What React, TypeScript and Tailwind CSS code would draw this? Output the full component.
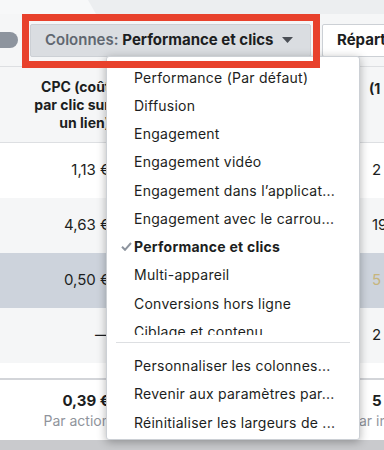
import React from "react";

const menuItems = [
  "Performance (Par défaut)",
  "Diffusion",
  "Engagement",
  "Engagement vidéo",
  "Engagement dans l’applicat...",
  "Engagement avec le carrou...",
  "Performance et clics",
  "Multi-appareil",
  "Conversions hors ligne",
  "Ciblage et contenu",
];

const actions = [
  "Personnaliser les colonnes...",
  "Revenir aux paramètres par...",
  "Réinitialiser les largeurs de ...",
];

const rows = [
  { cpc: "1,13 €", other: "2", bg: "bg-white" },
  { cpc: "4,63 €", other: "19", bg: "bg-[#f5f6f7]" },
  { cpc: "0,50 €", other: "", bg: "bg-[#cdd3dc]" },
  { cpc: "—", other: "2", bg: "bg-[#f5f6f7]" },
];

function Check() {
  return (
    <svg width="11" height="9" viewBox="0 0 11 9" className="absolute left-[14px] top-[9px]">
      <path d="M1 4.8 L4 7.8 L10 1" fill="none" stroke="#8d949e" strokeWidth="2" />
    </svg>
  );
}

export default function App() {
  const selected = "Performance et clics";
  return (
    <div
      className="relative w-[384px] h-[450px] overflow-hidden bg-[#f5f6f7] text-[#1c1e21]"
      style={{ fontFamily: "Inter, 'Liberation Sans', sans-serif" }}
    >
      {/* top strip with tab */}
      <div className="h-[14px] bg-[#eceef0] flex">
        <div className="w-[96px] h-full bg-[#f7f8f9] [clip-path:polygon(0_0,88px_0,96px_100%,0_100%)]"></div>
      </div>

      {/* toolbar */}
      <div className="h-[53px] flex items-center border-b border-[#dddfe2] bg-[#f5f6f7]">
        <div className="shrink-0 w-[28px] h-[16px] -ml-[10px] rounded-full bg-[#8d949e]"></div>
        <button
          type="button"
          className="shrink-0 ml-[12px] w-[281px] h-[33px] rounded-[2px] bg-[#dadde1] border border-[#ccd0d5] flex items-center pl-[14px] pr-[17px] text-[15px] whitespace-nowrap"
        >
          <span className="font-semibold text-[#606770]">Colonnes:&nbsp;</span>
          <span className="font-bold text-[#1c1e21]">Performance et clics</span>
          <svg width="11" height="6" viewBox="0 0 11 6" className="ml-auto">
            <path d="M0 0 H11 L5.5 6 Z" fill="#4b4f56" />
          </svg>
        </button>
        <button
          type="button"
          className="shrink-0 ml-[11px] h-[33px] pl-[14px] pr-4 rounded-[2px] bg-white border border-[#ccd0d5] text-[15px] font-bold whitespace-nowrap"
        >
          Répartition
        </button>
      </div>

      {/* table header */}
      <div className="h-[76px] flex items-center border-b border-[#dddfe2] bg-[#f5f6f7]">
        <div className="shrink-0 w-[118px] pr-2 text-right text-[14px] font-bold leading-[18px]">
          CPC (coût
          <br />
          par clic sur
          <br />
          un lien)
        </div>
        <div className="shrink-0 w-[232px]"></div>
        <div className="flex-1 self-start pt-[11px] pl-[19px] text-[14px] font-bold whitespace-nowrap overflow-hidden">
          (1
        </div>
      </div>

      {/* rows */}
      {rows.map((r, i) => (
        <div key={i} className={`h-[55px] ${r.bg} flex items-center text-[15px]`}>
          <div className="shrink-0 w-[118px] pr-2 text-right whitespace-nowrap">{r.cpc}</div>
          <div className="shrink-0 w-[232px]"></div>
          <div className="flex-1 pl-[22px] whitespace-nowrap overflow-hidden">
            {i === 2 ? <span className="text-[#c7b57c]">5</span> : r.other}
          </div>
        </div>
      ))}
      <div className="h-[15px] bg-white flex overflow-hidden text-[15px]">
        <div className="shrink-0 w-[118px] pr-2 pt-[11px] text-right whitespace-nowrap">0,18 €</div>
        <div className="shrink-0 w-[232px]"></div>
        <div className="flex-1 pl-[22px] pt-[11px]">2</div>
      </div>

      {/* footer totals */}
      <div className="h-[62px] bg-white border-t-2 border-[#d3d5d9] flex items-center">
        <div className="shrink-0 w-[118px] pr-2 text-right whitespace-nowrap">
          <div className="text-[15px] font-bold leading-[21px]">0,39 €</div>
          <div className="text-[14px] text-[#90949c] leading-[20px]">Par action</div>
        </div>
        <div className="shrink-0 w-[232px]"></div>
        <div className="flex-1 whitespace-nowrap overflow-hidden">
          <div className="text-[15px] font-bold leading-[21px] pl-[22px]">5</div>
          <div className="text-[14px] text-[#90949c] leading-[20px]">Par impression</div>
        </div>
      </div>
      <div className="h-[10px] bg-[#c9cacd]"></div>

      {/* dropdown menu */}
      <div className="absolute left-[106px] top-[56px] w-[254px] h-[384px] bg-white border border-[#ccd0d5] rounded-[3px] shadow-[0_2px_10px_rgba(0,0,0,0.3)] text-[14px] tracking-[0.25px]">
        <div className="h-[278px] pt-[6px] overflow-hidden">
          {menuItems.map((item) => (
            <div
              key={item}
              className={`relative h-[28.25px] flex items-center pl-[27px] whitespace-nowrap ${
                item === selected ? "font-bold" : ""
              }`}
            >
              {item === selected && <Check />}
              {item}
            </div>
          ))}
        </div>
        <div className="mt-[7px] mx-[9px] h-px bg-[#dddfe2]"></div>
        <div className="pt-[8px]">
          {actions.map((a) => (
            <div key={a} className="h-[28.5px] flex items-center pl-[27px] whitespace-nowrap">
              {a}
            </div>
          ))}
        </div>
      </div>

      {/* red annotation frame */}
      <div className="absolute left-[22px] top-[14px] w-[298px] h-[54px] border-[7px] border-[#e8412c]"></div>
    </div>
  );
}
